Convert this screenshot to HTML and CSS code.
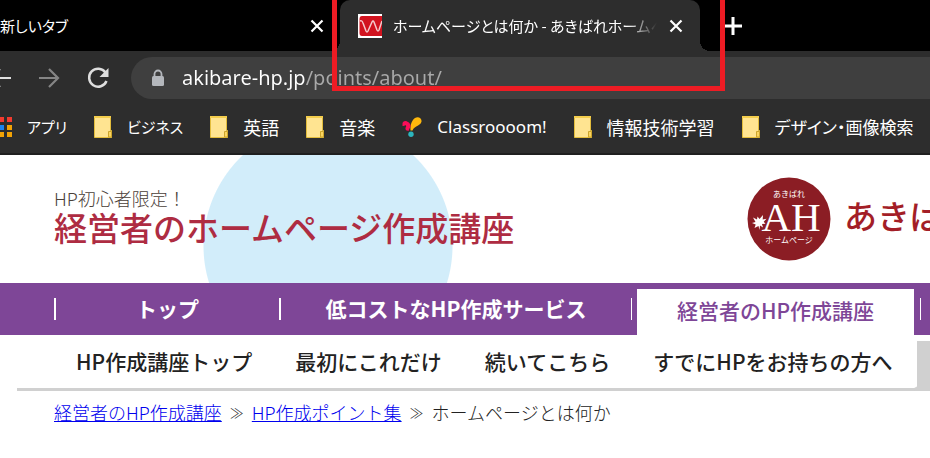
FILE: index.html
```html
<!DOCTYPE html>
<html lang="ja">
<head>
<meta charset="utf-8">
<title>ホームページとは何か - あきばれホームページ</title>
<link rel="stylesheet" href="styles.css">
</head>
<body>
<svg class="defs" aria-hidden="true">
  <symbol id="folder" viewBox="0 0 18 22">
    <path d="M.5.5h16v14h1v7H.5z" fill="#ffe491" stroke="#e3bd3c"/>
    <path d="M14.500 21v-5.500h3V21z" fill="#fbd560" stroke="#cda52c"/>
    <path d="M0 1h17" stroke="#f3cd4c" stroke-width="2"/>
  </symbol>
  <symbol id="cross" viewBox="0 0 14 14">
    <path d="M1.500 1.500l11 11M12.500 1.500l-11 11" stroke="#fff" stroke-width="2.200"/>
  </symbol>
</svg>

<div class="browser">
  <div class="tabs">
    <div class="tab">
      <span class="tab-title">新しいタブ</span>
      <button class="icon-button" aria-label="タブを閉じる"><svg width="14" height="14"><use href="#cross"/></svg></button>
    </div>
    <div class="tab tab-active">
      <svg class="favicon" width="24" height="24" viewBox="0 0 24 24">
        <path d="M0 0h24v24H0z" fill="#fff"/>
        <path d="M4 2h20v20H4q-2.500 0-2.500-3V5q0-3 2.500-3z" fill="#d2131f"/>
        <path d="M2 7q2-1 3 2l3 8q1 2 2 0l4-9q1-2 2 0l3 8q1 2 2 0l3-9" fill="none" stroke="#f5c9cb" stroke-width="1.500"/>
      </svg>
      <span class="tab-title">ホームページとは何か - あきばれホームページ</span>
      <button class="icon-button" aria-label="タブを閉じる"><svg width="14" height="14"><use href="#cross"/></svg></button>
    </div>
    <button class="icon-button new-tab" aria-label="新しいタブを開く"><svg width="18" height="18" viewBox="0 0 18 18"><path d="M9 0v18M0 9h18" stroke="#fff" stroke-width="3"/></svg></button>
  </div>

  <div class="toolbar">
    <button class="icon-button" aria-label="戻る"><svg width="22" height="22" viewBox="0 0 22 22"><path d="M22 11H2M11 2l-9 9 9 9" fill="none" stroke="#dedede" stroke-width="2.200"/></svg></button>
    <button class="icon-button" aria-label="進む"><svg width="22" height="22" viewBox="0 0 22 22"><path d="M1 11h19M11 2l9 9-9 9" fill="none" stroke="#858585" stroke-width="2.200"/></svg></button>
    <button class="icon-button" aria-label="再読み込み"><svg width="22" height="22" viewBox="0 0 22 22"><path d="M18.500 5.500A9 9 0 1 0 19.500 14" fill="none" stroke="#dedede" stroke-width="2.500"/><path d="M21.500 1v9h-9z" fill="#dedede"/></svg></button>
    <label class="address">
      <svg width="14" height="18" viewBox="0 0 14 18"><rect x="1" y="7" width="12" height="10" rx="1.500" fill="#b4b7bc"/><path d="M3.500 8V5a3.500 3.500 0 0 1 7 0v3" fill="none" stroke="#b4b7bc" stroke-width="1.800"/></svg>
      <input class="url" type="text" value="akibare-hp.jp/points/about/" aria-label="アドレス">
    </label>
  </div>

  <nav class="bookmarks" aria-label="ブックマーク">
    <a href="#"><svg width="20" height="20" viewBox="0 0 20 20"><path d="M0 0h5v5H0zM7 0h5v5H7zM15 0h5v5h-5z" fill="#f23b2f"/><path d="M0 8h5v5H0z" fill="#22a455"/><path d="M7 8h5v5H7z" fill="#1a83f0"/><path d="M15 8h5v5h-5zM7 15h5v5H7zM15 15h5v5h-5z" fill="#f3a305"/><path d="M0 15h5v5H0z" fill="#22a455"/></svg><span class="kana">アプリ</span></a>
    <a href="#"><svg width="18" height="22"><use href="#folder"/></svg><span class="kana">ビジネス</span></a>
    <a href="#"><svg width="18" height="22"><use href="#folder"/></svg><span>英語</span></a>
    <a href="#"><svg width="18" height="22"><use href="#folder"/></svg><span>音楽</span></a>
    <a href="#"><svg width="20" height="20" viewBox="0 0 20 20"><path d="M8.500 13.500C8 8 10 3 13 1c3-2 7 0 6.500 3.500-.5 3-4 4-6 5.500-1.500 1-2.500 2-3 3.500z" fill="#ffb80c"/><path d="M.5 9V6.500C.5 4.500 3 3.500 5 4.500c3 1 4 3.500 3.500 5.500-.5 1-1.500 1.500-1.500 3.500-2 1-4-.5-3.500-2.500.3-1 1-1.500.5-2.500C3 7.500 2.500 9 .5 9z" fill="#f90d58"/><circle cx="9" cy="17.300" r="2.700" fill="#2cb5bd"/></svg><span class="latin">Classroooom!</span></a>
    <a href="#"><svg width="18" height="22"><use href="#folder"/></svg><span>情報技術学習</span></a>
    <a href="#"><svg width="18" height="22"><use href="#folder"/></svg><span class="mixed">デザイン・画像検索</span></a>
  </nav>
  <div class="marker"></div>
</div>

<header class="site-header">
  <div class="site-title">
    <p>HP初心者限定！</p>
    <h1>経営者のホームページ作成講座</h1>
  </div>
  <a class="brand" href="#">
    <svg width="84" height="84" viewBox="0 0 84 84">
      <circle cx="42" cy="42" r="41.500" fill="#8b1d24"/>
      <g fill="#fff" text-anchor="middle">
        <text class="logo-small" x="42" y="20" font-size="8">あきばれ</text>
        <text class="logo-large" x="44" y="54" font-size="41">AH</text>
        <text class="logo-small" x="42" y="66" font-size="8">ホームページ</text>
      </g>
      <path d="M12.500 53l-1-4-4 2 1.200-3.500L5 46l3.500-1L6 40.500l4 2 .5-3 2 2.500 3.500-4-.3 4.500 3.800-.8-2.800 3 1.800 2-3.500.3 1 3.500-3-2z" fill="#fff"/>
    </svg>
    <span>あきばれホームページ</span>
  </a>
</header>

<nav class="main-nav" aria-label="メイン">
  <ul>
    <li class="nav-top"><a href="#">トップ</a></li>
    <li class="nav-service"><a href="#">低コストなHP作成サービス</a></li>
    <li class="nav-course"><a href="#" aria-current="page">経営者のHP作成講座</a></li>
    <li class="nav-rest"></li>
  </ul>
</nav>

<nav class="sub-nav" aria-label="講座">
  <div class="sub-links">
    <a href="#">HP作成講座トップ</a>
    <a href="#">最初にこれだけ</a>
    <a href="#">続いてこちら</a>
    <a href="#">すでにHPをお持ちの方へ</a>
  </div>
</nav>

<nav class="breadcrumb" aria-label="パンくず">
  <a href="#">経営者のHP作成講座</a>
  <span class="arrow">≫</span>
  <a href="#">HP作成ポイント集</a>
  <span class="arrow">≫</span>
  <span>ホームページとは何か</span>
</nav>
</body>
</html>
```
FILE: styles.css
```css
* { box-sizing: border-box; }

body {
  margin: 0;
  overflow: hidden;
  background: #fff;
  color: #222;
  font-family: "Noto Sans CJK JP", sans-serif;
}

a { color: inherit; text-decoration: none; }

.defs { position: absolute; width: 0; height: 0; }

/* Browser frame */
.browser {
  position: relative;
  overflow: hidden;
  background: #2d2d2d;
  border-bottom: 2px solid #1f1f1f;
  color: #fff;
  font-size: 18px;
  line-height: 24px;
  font-feature-settings: "palt";
}

.icon-button {
  display: flex;
  flex: none;
  padding: 0;
  border: 0;
  background: none;
}

.tabs { display: flex; height: 51px; background: #000; }

.tab {
  display: flex;
  flex: none;
  align-items: center;
  width: 340px;
  padding-right: 16px;
}

.tab-title {
  flex: 1;
  min-width: 0;
  overflow: hidden;
  font-size: 15px;
  white-space: nowrap;
}

.tab-active {
  position: relative;
  width: 360px;
  padding: 0 17px 0 18px;
  border-radius: 10px 10px 0 0;
  background: #2d2d2d;
}

.tab-active::before,
.tab-active::after {
  content: "";
  position: absolute;
  bottom: 0;
  width: 10px;
  height: 10px;
}

.tab-active::before {
  right: 100%;
  background: radial-gradient(circle at 0 0, #0000 10px, #2d2d2d 10px);
}

.tab-active::after {
  left: 100%;
  background: radial-gradient(circle at 100% 0, #0000 10px, #2d2d2d 10px);
}

.tab-active .tab-title {
  margin: 0 12px 0 11px;
  mask-image: linear-gradient(to left, #0000, #000 30px);
}

.favicon { flex: none; }

.new-tab { align-self: center; margin-left: 24px; }

.toolbar {
  display: flex;
  align-items: center;
  gap: 27px;
  height: 54px;
  margin-left: -11px;
}

.address {
  display: flex;
  flex: 1;
  align-items: center;
  gap: 17px;
  height: 42px;
  margin: 0 -32px 0 -5px;
  padding-left: 20px;
  border-radius: 21px 0 0 21px;
  background: #3f3f3f;
}

.url {
  flex: 1;
  min-width: 0;
  padding: 0;
  border: 0;
  outline: 0;
  background: linear-gradient(to right, #fff 123px, #a9a9a9 123px);
  background-clip: text;
  color: transparent;
  font: 20px/32px "Noto Sans", sans-serif;
}

.bookmarks {
  display: flex;
  align-items: center;
  gap: 27px;
  height: 48px;
  margin-left: -8px;
  padding-bottom: 5px;
  white-space: nowrap;
}

.bookmarks a {
  display: flex;
  flex: none;
  align-items: center;
  gap: 15px;
}

.kana { font-size: 15px; }
.mixed { font-size: 17px; }
.latin { font-family: "Noto Sans", sans-serif; font-size: 17px; }

.marker {
  position: absolute;
  top: -5px;
  left: 332px;
  width: 393px;
  height: 96px;
  border: 5px solid #ed1c24;
}

/* Site header */
.site-header {
  display: flex;
  align-items: flex-start;
  height: 128px;
  overflow: hidden;
  background: radial-gradient(circle at 328px 91px, #d2edfa 124px, #0000 125px);
  white-space: nowrap;
}

.site-title { flex: none; width: 747px; padding: 31px 0 0 54px; }

.site-title p {
  margin: 0;
  color: #4a4038;
  font-size: 18px;
  font-weight: 300;
  line-height: 24px;
}

.site-title h1 {
  margin: 0;
  color: #ae2c42;
  font-size: 33px;
  font-weight: 500;
  line-height: 34px;
}

.brand {
  display: flex;
  flex: none;
  align-items: center;
  gap: 13px;
  padding-top: 22px;
  color: #a31e27;
  font-size: 33px;
  font-weight: 500;
  line-height: 76px;
}

.brand svg { flex: none; font-weight: 400; }
.brand span { padding-bottom: 8px; }
.logo-small { font-family: "Noto Sans CJK JP", sans-serif; }
.logo-large { font-family: "Liberation Serif", serif; }

/* Main navigation */
.main-nav {
  overflow: hidden;
  background: #7e4697;
  color: #fff;
  font-size: 21px;
  font-weight: 700;
}

.main-nav ul {
  display: flex;
  height: 52px;
  margin: 0;
  padding: 0 0 0 54px;
  list-style: none;
}

.main-nav li {
  display: flex;
  flex: none;
  white-space: nowrap;
}

.main-nav li::before {
  content: "";
  width: 2px;
  height: 22px;
  margin-top: 15px;
  background: #fff;
}

.main-nav a {
  flex: 1;
  line-height: 50px;
  text-align: center;
}

.nav-top { width: 225px; }
.nav-service { width: 352px; }
.nav-course { width: 289px; }

.main-nav .nav-course::before,
.main-nav .nav-rest::before { width: 1px; }

.main-nav a[aria-current] {
  margin: 6px 6px 0 5px;
  background: #fff;
  color: #7e4697;
  font-weight: 500;
  line-height: 42px;
}

/* Sub navigation */
.sub-nav {
  margin-left: 17px;
  background: linear-gradient(#fff 6px, #d0d0d0 6px);
}

.sub-links {
  display: flex;
  gap: 43px;
  width: 900px;
  height: 56px;
  padding-left: 59px;
  border-bottom: 3px solid #d0d0d0;
  border-radius: 0 0 5px;
  background: #fff;
  background-clip: padding-box;
  font-size: 21px;
  font-weight: 500;
  line-height: 52px;
  white-space: nowrap;
}

/* Breadcrumb */
.breadcrumb {
  display: flex;
  gap: 8px;
  padding: 9px 54px;
  font-size: 18px;
  font-weight: 300;
  line-height: 24px;
}

.breadcrumb a { color: #00e; text-decoration: underline; }
.arrow { font-size: 14px; }
```
